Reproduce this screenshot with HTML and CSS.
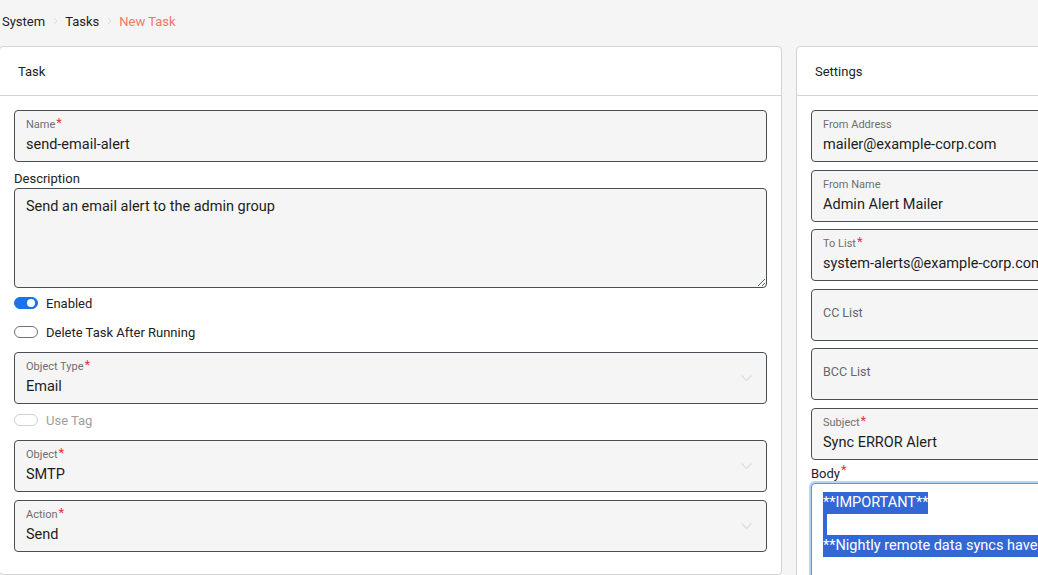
FILE: index.html
```html
<!DOCTYPE html>
<html lang="en">
<head>
<meta charset="utf-8">
<title>New Task</title>
<link rel="stylesheet" href="styles.css">
</head>
<body>
<nav class="crumbs">
  <span class="crumb">System</span>
  <span class="sep"><svg width="5" height="8" viewBox="0 0 5 8"><polyline points="1,1 4,4 1,7" fill="none" stroke="#dcdcdc" stroke-width="1"/></svg></span>
  <span class="crumb">Tasks</span>
  <span class="sep"><svg width="5" height="8" viewBox="0 0 5 8"><polyline points="1,1 4,4 1,7" fill="none" stroke="#dcdcdc" stroke-width="1"/></svg></span>
  <span class="crumb current">New Task</span>
</nav>

<main class="columns">
  <section class="card">
    <header class="card-head">Task</header>
    <div class="card-body">
      <div class="field">
        <div class="flabel">Name<span class="req">*</span></div>
        <div class="fvalue">send-email-alert</div>
      </div>
      <label class="plain-label desc-label">Description</label>
      <textarea class="area">Send an email alert to the admin group</textarea>

      <div class="toggle-row first">
        <span class="toggle on"><span class="knob"></span></span>
        <span class="tlabel">Enabled</span>
      </div>
      <div class="toggle-row">
        <span class="toggle"></span>
        <span class="tlabel">Delete Task After Running</span>
      </div>

      <div class="field select mt10">
        <div class="flabel">Object Type<span class="req">*</span></div>
        <div class="fvalue">Email</div>
        <svg class="chev" width="11" height="7" viewBox="0 0 11 7"><polyline points="0.5,0.5 5.5,5.5 10.5,0.5" fill="none" stroke="#d9dce1" stroke-width="1.2"/></svg>
      </div>

      <div class="toggle-row disabled tag-row">
        <span class="toggle"></span>
        <span class="tlabel">Use Tag</span>
      </div>

      <div class="field select mt10">
        <div class="flabel">Object<span class="req">*</span></div>
        <div class="fvalue">SMTP</div>
        <svg class="chev" width="11" height="7" viewBox="0 0 11 7"><polyline points="0.5,0.5 5.5,5.5 10.5,0.5" fill="none" stroke="#d9dce1" stroke-width="1.2"/></svg>
      </div>
      <div class="field select mt8">
        <div class="flabel">Action<span class="req">*</span></div>
        <div class="fvalue">Send</div>
        <svg class="chev" width="11" height="7" viewBox="0 0 11 7"><polyline points="0.5,0.5 5.5,5.5 10.5,0.5" fill="none" stroke="#d9dce1" stroke-width="1.2"/></svg>
      </div>
    </div>
  </section>

  <section class="card">
    <header class="card-head">Settings</header>
    <div class="card-body stack">
      <div class="field">
        <div class="flabel">From Address</div>
        <div class="fvalue">mailer@example-corp.com</div>
      </div>
      <div class="field">
        <div class="flabel">From Name</div>
        <div class="fvalue">Admin Alert Mailer</div>
      </div>
      <div class="field">
        <div class="flabel">To List<span class="req">*</span></div>
        <div class="fvalue">system-alerts@example-corp.com</div>
      </div>
      <div class="field empty">
        <div class="placeholder">CC List</div>
      </div>
      <div class="field empty">
        <div class="placeholder">BCC List</div>
      </div>
      <div class="field">
        <div class="flabel">Subject<span class="req">*</span></div>
        <div class="fvalue">Sync ERROR Alert</div>
      </div>
      <div class="body-group">
        <label class="plain-label body-label">Body<span class="req">*</span></label>
        <div class="body-area">
          <div class="line"><span class="sel">**IMPORTANT**</span></div>
          <div class="line"><span class="sel blank"></span></div>
          <div class="line"><span class="sel">**Nightly remote data syncs have failed**</span></div>
        </div>
      </div>
    </div>
  </section>
</main>
</body>
</html>
```

FILE: styles.css
```css
* { box-sizing: border-box; }

html, body {
  margin: 0;
  padding: 0;
}

body {
  width: 1038px;
  height: 575px;
  overflow: hidden;
  background: #f5f5f5;
  font-family: Roboto, "Liberation Sans", Arial, sans-serif;
  color: #212121;
}

.crumbs {
  height: 42px;
  margin-bottom: 4px;
  padding-left: 2px;
  display: flex;
  align-items: center;
  font-size: 13px;
}

.crumb { color: #222; }
.crumb.current { color: #f4766a; }

.sep {
  display: inline-flex;
  align-items: center;
  margin: 0 7px 0 8px;
}

.columns {
  display: grid;
  grid-template-columns: 783px 782px;
  column-gap: 14px;
  margin-left: -1px;
  align-items: start;
}

.card {
  background: #fff;
  border: 1px solid #d3d3d3;
  border-radius: 4px;
}

.card-head {
  height: 49px;
  border-bottom: 1px solid #d3d3d3;
  display: flex;
  align-items: center;
  padding: 0 0 0 18px;
  font-size: 13px;
  color: #222;
}

.card-body {
  padding: 14px 14px 22px 14px;
  display: flex;
  flex-direction: column;
}

.card-body.stack { row-gap: 7.5px; padding-bottom: 60px; }

.field {
  position: relative;
  height: 52px;
  border: 1px solid #4a4e55;
  border-radius: 4px;
  background: #f5f5f5;
  padding: 7px 11px 0 11px;
}

.flabel {
  font-size: 11px;
  line-height: 14px;
  color: #6f6f6f;
  margin-bottom: 3px;
}

.req {
  color: #e2363f;
  font-size: 13px;
  line-height: 10px;
  vertical-align: top;
  margin-left: 1px;
}

.fvalue {
  font-size: 14.5px;
  line-height: 20px;
  color: #1d1d1d;
  white-space: nowrap;
}

.field.empty { padding-top: 15px; }

.placeholder {
  font-size: 12.5px;
  line-height: 16px;
  color: #666;
}

.chev {
  position: absolute;
  right: 14px;
  top: 22px;
}

.mt10 { margin-top: 10px; }
.mt8 { margin-top: 8px; }

.plain-label {
  display: block;
  font-size: 13px;
  line-height: 17px;
  color: #222;
}

.desc-label { margin-top: 8px; margin-bottom: 1px; }

.area {
  display: block;
  width: 100%;
  height: 100px;
  border: 1px solid #4a4e55;
  border-radius: 4px;
  background: #f5f5f5;
  padding: 9px 11px 7px 11px;
  font-family: Roboto, "Liberation Sans", Arial, sans-serif;
  font-size: 14.5px;
  line-height: 18px;
  color: #1d1d1d;
  resize: vertical;
  outline: none;
}

.toggle-row {
  height: 20px;
  display: flex;
  align-items: center;
  gap: 8px;
  margin-top: 9px;
  font-size: 13px;
  color: #222;
}

.toggle-row.first { margin-top: 5px; }
.toggle-row.tag-row { margin-top: 6px; }

.toggle {
  position: relative;
  width: 24px;
  height: 12px;
  border: 1.3px solid #6d7178;
  border-radius: 6px;
  background: #fff;
  flex: none;
}

.toggle.on {
  background: #1a73e8;
  border-color: #1a73e8;
}

.toggle .knob {
  position: absolute;
  right: 2px;
  top: 1px;
  width: 8px;
  height: 8px;
  border-radius: 50%;
  background: #fff;
}

.toggle-row.disabled { color: #a0a0a0; }
.toggle-row.disabled .toggle { border-color: #cfcfcf; }

.body-label { margin-top: -2px; }

.body-area {
  margin-top: 1px;
  height: 220px;
  background: #fff;
  border: 1px solid #5b8ff0;
  border-radius: 4px;
  box-shadow: 0 0 0 2px #b9d1fb;
  padding: 8px 11px;
  font-size: 14.5px;
  color: #fff;
  overflow: hidden;
}

.line {
  height: 21.7px;
  white-space: nowrap;
}

.sel {
  display: inline-block;
  height: 21.7px;
  line-height: 21.7px;
  background: #3367d6;
  color: #fff;
  vertical-align: top;
}

.sel.blank { width: 4px; }
```
